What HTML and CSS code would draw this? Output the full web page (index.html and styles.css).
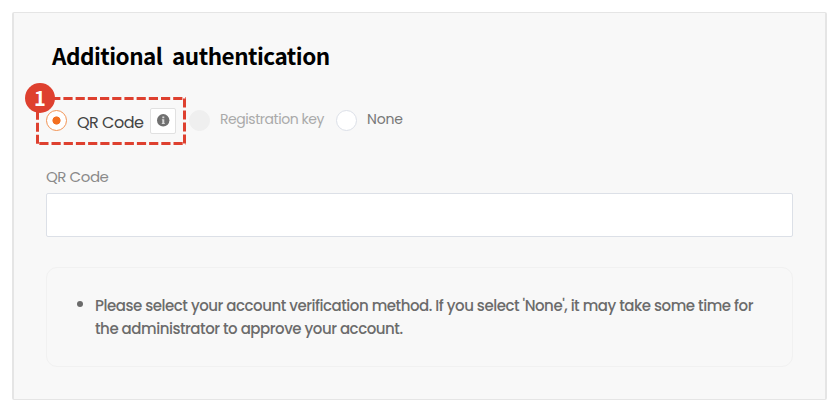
FILE: index.html
```html
<!DOCTYPE html>
<html lang="en">
<head>
<meta charset="utf-8">
<title>Additional authentication</title>
<link rel="stylesheet" href="styles.css">
</head>
<body>
<main class="card">
  <h1 class="title">Additional authentication</h1>
  <div class="options">
    <label class="option option-qr"><span class="radio checked"></span><span class="qr-text">QR Code</span></label>
    <span class="info">
      <svg width="13" height="13" viewBox="0 0 13 13"><circle cx="6.2" cy="6.3" r="6.2" fill="#707070"/><path d="M5.300 2.600h2v1.600h-2zM4.900 5.200h2.400v3.900h.5v1H4.800v-1h.5V6.200h-.4z" fill="#d8d8d8"/></svg>
    </span>
    <label class="option option-key"><span class="radio disabled"></span><span class="key-text">Registration key</span></label>
    <label class="option option-none"><span class="radio"></span><span class="none-text">None</span></label>
    <svg class="highlight" width="150" height="49" viewBox="0 0 150 49" fill="none" stroke="#de402f" stroke-width="3"><path d="M3 1.500H150" stroke-dasharray="9.200 3"/><path d="M148.500 1.500V49" stroke-dasharray="9 3"/><path d="M3.300 46.500H150" stroke-dasharray="9.200 3"/><path d="M1.500 46.700V1" stroke-dasharray="9 3"/></svg>
    <span class="badge">1</span>
  </div>
  <label class="field-label" for="code"><span>QR Code</span></label>
  <input class="field" id="code" type="text">
  <section class="notice">
    <ul class="notice-list">
      <li><span class="line-one">Please select your account verification method. If you select 'None', it may take some time for</span><span class="line-two">the administrator to approve your account.</span></li>
    </ul>
  </section>
</main>
</body>
</html>
```

FILE: styles.css
```css
* { box-sizing: border-box; }
body { margin: 0; padding: 12px; background: #fff; font-family: Poppins, Inter, sans-serif; }
.card { width: 815px; height: 388px; padding: 25px 32px 0; background: #f8f8f8; border: solid #e5e5e5; border-width: 1px 2px; border-radius: 2px; }
.title { margin: 0 0 0 6px; height: 34px; font: 700 22.5px/34px "Malgun Gothic", "Noto Sans CJK KR", sans-serif; letter-spacing: -0.5px; word-spacing: 5px; white-space: nowrap; color: #000; }
.options { position: relative; display: flex; align-items: center; height: 27px; margin-top: 35px; white-space: nowrap; }
.option { display: flex; align-items: center; font-size: 14px; }
.radio { flex: none; width: 21px; height: 21px; border: 1px solid #dce0e8; border-radius: 50%; background: #fff; }
.checked { border: 1.5px solid #f39455; background: radial-gradient(circle, #f36f20 3.7px, #fff 4.4px); }
.disabled { background: #efefef; border-color: #efefef; }
.option-qr { width: 104px; gap: 10px; }
.qr-text { font-size: 16px; letter-spacing: -0.5px; color: #444; padding-top: 3px; }
.info { display: flex; align-items: center; justify-content: center; width: 26px; height: 26px; background: #fff; border: 1px solid #e1e1e1; border-radius: 2px; }
.option-key { width: 147px; margin-left: 13px; gap: 10px; color: #aaa; }
.option-none { gap: 10px; color: #777; }
.key-text { margin-top: -2px; letter-spacing: -0.45px; }
.none-text { margin-top: -2px; letter-spacing: -0.2px; }
.highlight { position: absolute; left: -10px; top: -10px; }
.badge { position: absolute; left: -21px; top: -24px; width: 30px; height: 30px; border-radius: 50%; background: #de402f; color: #fff; font: 700 20px/30px "Noto Sans CJK KR", sans-serif; text-align: center; }
.field-label { display: block; height: 20px; margin-top: 33px; font-size: 15px; line-height: 20px; letter-spacing: -0.45px; color: #8a8a8a; }
.field { display: block; width: 747px; height: 44px; margin-top: 6px; border: 1px solid #dce0e7; border-radius: 2px; background: #fff; outline: 0; }
.notice { width: 747px; height: 100px; margin-top: 30px; padding: 27px 30px; border: 1px solid #f1f1f1; border-radius: 11px; }
.notice-list { margin: 0; padding: 0; list-style: none; font-size: 15px; font-weight: 500; line-height: 22.5px; color: #6b6b6b; white-space: nowrap; }
.notice-list li { display: grid; grid-template-columns: 18px 1fr; }
.notice-list li::before { content: ""; width: 6px; height: 6px; border-radius: 50%; background: #6b6b6b; margin-top: 6px; }
.line-two { grid-column: 2; }
.line-one, .line-two { letter-spacing: -0.466px; }
```
